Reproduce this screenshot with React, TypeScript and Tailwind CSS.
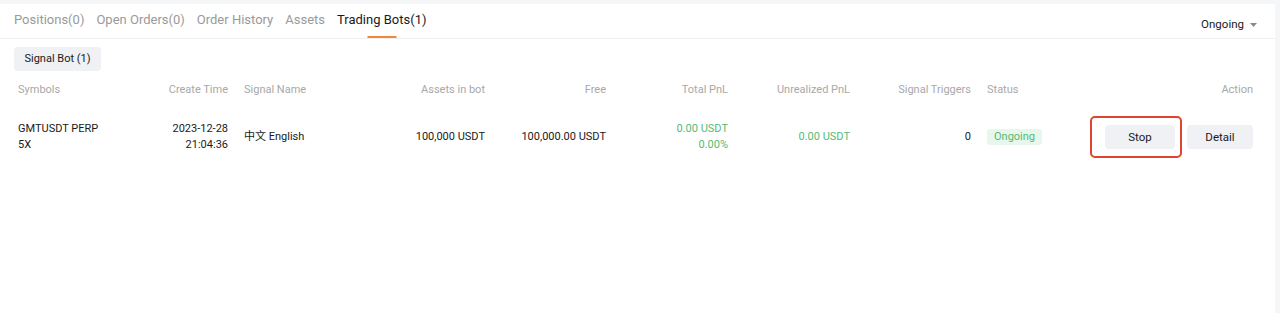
import React from "react";

const font = { fontFamily: "Roboto, 'Noto Sans CJK SC', sans-serif" };

function Cell({ children, w, align = "left" }: { children: React.ReactNode; w: string; align?: "left" | "right" }) {
  return (
    <div className={`${w} shrink-0 px-2 ${align === "right" ? "text-right" : "text-left"}`}>{children}</div>
  );
}

export default function App() {
  return (
    <div className="w-[1280px] h-[313px] bg-[#f5f6f8] pt-[4px] pr-[5px] overflow-hidden" style={font}>
      <div className="bg-white h-full w-full flex flex-col">
        {/* Tabs */}
        <div className="flex items-end justify-between border-b border-[#f0f0f0] h-[35px] px-[14px]">
          <div className="flex items-end gap-[12px] text-[13px] h-full">
            <div className="h-full flex items-center pb-[2px] text-[#9a9a9a]">Positions(0)</div>
            <div className="h-full flex items-center pb-[2px] text-[#9a9a9a]">Open Orders(0)</div>
            <div className="h-full flex items-center pb-[2px] text-[#9a9a9a]">Order History</div>
            <div className="h-full flex items-center pb-[2px] text-[#9a9a9a]">Assets</div>
            <div className="h-full flex items-center pb-[2px] text-[#1a1a1a] relative">
              Trading Bots(1)
              <div className="absolute bottom-0 left-1/2 -translate-x-1/2 w-[29px] h-[2px] bg-[#f0883a]" />
            </div>
          </div>
          <div className="h-full flex items-center gap-[6px] text-[11.5px] text-[#1a1a1a] pr-[4px] pt-[8px]">
            Ongoing
            <svg width="7" height="4" viewBox="0 0 7 4"><path d="M0 0h7L3.5 4z" fill="#8a8a8a" /></svg>
          </div>
        </div>

        {/* Signal bot chip */}
        <div className="px-[14px] pt-[8px]">
          <div className="w-[87px] h-[24px] rounded-[4px] bg-[#f0f1f5] text-[11px] text-[#1a1a1a] flex items-center justify-center">
            Signal Bot (1)
          </div>
        </div>

        {/* Table header */}
        <div className="flex items-center h-[22px] mt-[8px] pl-[10px] text-[11px] text-[#a8a8a8]">
          <Cell w="w-[113px]">Symbols</Cell>
          <Cell w="w-[113px]" align="right">Create Time</Cell>
          <Cell w="w-[136px]">Signal Name</Cell>
          <Cell w="w-[121px]" align="right">Assets in bot</Cell>
          <Cell w="w-[121px]" align="right">Free</Cell>
          <Cell w="w-[122px]" align="right">Total PnL</Cell>
          <Cell w="w-[122px]" align="right">Unrealized PnL</Cell>
          <Cell w="w-[121px]" align="right">Signal Triggers</Cell>
          <Cell w="w-[100px]">Status</Cell>
          <Cell w="w-[182px]" align="right">Action</Cell>
        </div>

        {/* Data row */}
        <div className="flex items-center h-[72px] pl-[10px] text-[11px] leading-[16px] text-[#1a1a1a]">
          <Cell w="w-[113px]">
            <div>GMTUSDT PERP</div>
            <div>5X</div>
          </Cell>
          <Cell w="w-[113px]" align="right">
            <div>2023-12-28</div>
            <div>21:04:36</div>
          </Cell>
          <Cell w="w-[136px]">中文 English</Cell>
          <Cell w="w-[121px]" align="right">100,000 USDT</Cell>
          <Cell w="w-[121px]" align="right">100,000.00 USDT</Cell>
          <Cell w="w-[122px]" align="right">
            <div className="text-[#55bb74]">0.00 USDT</div>
            <div className="text-[#55bb74]">0.00%</div>
          </Cell>
          <Cell w="w-[122px]" align="right">
            <span className="text-[#55bb74]">0.00 USDT</span>
          </Cell>
          <Cell w="w-[121px]" align="right">0</Cell>
          <Cell w="w-[100px]">
            <span className="inline-flex items-center h-[16px] px-[7px] rounded-[3px] bg-[#e7f7eb] text-[#55bb74]">Ongoing</span>
          </Cell>
          <div className="w-[182px] shrink-0 px-2 flex justify-end gap-[12px]">
            <div className="relative">
              <div className="w-[70px] h-[24px] rounded-[4px] bg-[#f0f1f5] flex items-center justify-center text-[11.5px]">Stop</div>
              <div className="absolute -left-[15px] -right-[7px] -top-[9px] -bottom-[9px] border-2 border-[#e0432e] rounded-[5px]" />
            </div>
            <div className="w-[66px] h-[24px] rounded-[4px] bg-[#f0f1f5] flex items-center justify-center text-[11.5px]">Detail</div>
          </div>
        </div>
      </div>
    </div>
  );
}
